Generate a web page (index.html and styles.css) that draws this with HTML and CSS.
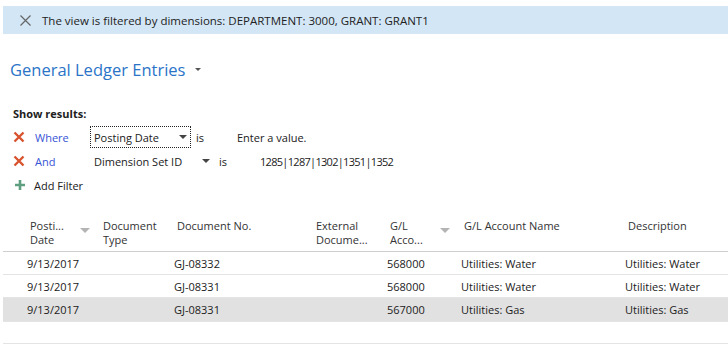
FILE: index.html
```html
<!DOCTYPE html>
<html lang="en">
<head>
  <meta charset="UTF-8">
  <title>General Ledger Entries</title>
  <link rel="stylesheet" href="styles.css">
</head>
<body>
  <div class="banner">
    <svg class="banner-close" width="11" height="11" viewBox="0 0 11 11">
      <path d="M0.5 0.5 L10.5 10.5 M10.5 0.5 L0.5 10.5" stroke="#666" stroke-width="1.2" fill="none"/>
    </svg>
    <span>The view is filtered by dimensions: DEPARTMENT: 3000, GRANT: GRANT1</span>
  </div>

  <div class="title">
    <span>General Ledger Entries</span>
    <span class="title-caret"></span>
  </div>

  <div class="filters">
    <div class="filters-label">Show results:</div>
    <div class="filter-row">
      <svg class="icon-remove" width="12" height="12" viewBox="0 0 12 12">
        <path d="M1.5 1.5 L10.5 10.5 M10.5 1.5 L1.5 10.5" stroke="#d9532f" stroke-width="2.4" fill="none"/>
      </svg>
      <span class="filter-op">Where</span>
      <div class="filter-field focused">
        <span>Posting Date</span>
        <span class="caret"></span>
      </div>
      <span class="filter-is">is</span>
      <span class="filter-value">Enter a value.</span>
    </div>
    <div class="filter-row">
      <svg class="icon-remove" width="12" height="12" viewBox="0 0 12 12">
        <path d="M1.5 1.5 L10.5 10.5 M10.5 1.5 L1.5 10.5" stroke="#d9532f" stroke-width="2.4" fill="none"/>
      </svg>
      <span class="filter-op">And</span>
      <div class="filter-field wide">
        <span>Dimension Set ID</span>
        <span class="caret"></span>
      </div>
      <span class="filter-is">is</span>
      <span class="filter-value ids">1285|1287|1302|1351|1352</span>
    </div>
    <div class="filter-row add">
      <svg class="icon-add" width="12" height="12" viewBox="0 0 12 12">
        <path d="M6 1 V11 M1 6 H11" stroke="#5e9f80" stroke-width="2.6" fill="none"/>
      </svg>
      <span>Add Filter</span>
    </div>
  </div>

  <div class="grid">
    <div class="grid-head">
      <div></div>
      <div class="col sorted">Posti...<br>Date<span class="sort"></span></div>
      <div class="col">Document<br>Type</div>
      <div class="col">Document No.</div>
      <div class="col">External<br>Docume...</div>
      <div class="col sorted">G/L<br>Acco...<span class="sort"></span></div>
      <div class="col">G/L Account Name</div>
      <div class="col">Description</div>
    </div>
    <div class="grid-row">
      <div></div>
      <div>9/13/2017</div>
      <div></div>
      <div>GJ-08332</div>
      <div></div>
      <div>568000</div>
      <div>Utilities: Water</div>
      <div>Utilities: Water</div>
    </div>
    <div class="grid-row">
      <div></div>
      <div>9/13/2017</div>
      <div></div>
      <div>GJ-08331</div>
      <div></div>
      <div>568000</div>
      <div>Utilities: Water</div>
      <div>Utilities: Water</div>
    </div>
    <div class="grid-row selected">
      <div></div>
      <div>9/13/2017</div>
      <div></div>
      <div>GJ-08331</div>
      <div></div>
      <div>567000</div>
      <div>Utilities: Gas</div>
      <div>Utilities: Gas</div>
    </div>
    <div class="grid-row empty"></div>
  </div>
</body>
</html>
```

FILE: styles.css
```css
* {
  box-sizing: border-box;
}

body {
  margin: 0;
  background-color: #ffffff;
  font-family: 'Open Sans', 'Noto Sans', sans-serif;
  font-size: 11px;
  color: #212121;
}

.banner {
  display: flex;
  align-items: center;
  gap: 11px;
  margin: 6px 0 0 3px;
  height: 28px;
  padding-left: 17px;
  background-color: #d3e6f6;
  font-size: 11.5px;
  color: #222;
}

.title {
  display: flex;
  align-items: center;
  gap: 10px;
  margin-top: 24px;
  padding-left: 10px;
  font-size: 16.5px;
  color: #2a74c8;
}

.title-caret,
.caret {
  width: 0;
  height: 0;
  border-left: 4px solid transparent;
  border-right: 4px solid transparent;
  border-top: 4px solid #444;
}

.title-caret {
  border-left-width: 3px;
  border-right-width: 3px;
  border-top-width: 3px;
  border-top-color: #555;
}

.filters {
  margin-top: 25px;
  padding-left: 13px;
}

.filters-label {
  font-weight: 700;
  height: 19px;
}

.filter-row {
  display: flex;
  align-items: center;
  height: 24px;
}

.icon-remove {
  margin-right: 10px;
}

.filter-op {
  width: 55px;
  color: #3653d6;
}

.filter-field {
  display: flex;
  align-items: center;
  justify-content: space-between;
  width: 101px;
  height: 22px;
  padding: 0 3px;
  border: 1px solid transparent;
}

.filter-field.focused {
  border: 1px dotted #222;
}

.filter-field.wide {
  width: 124px;
}

.filter-is {
  margin-left: 5px;
  width: 41px;
}

.filter-value.ids {
  letter-spacing: -0.7px;
}

.filter-row.add {
  gap: 8px;
}

.icon-add {
  margin-left: 1px;
}

.grid {
  margin: 20px 0 0 3px;
}

.grid-head,
.grid-row {
  display: grid;
  grid-template-columns: 24px 73px 74px 139px 74px 74px 164px 1fr;
  border-bottom: 1px solid #e4e4e4;
}

.grid-head {
  height: 35px;
  line-height: 14px;
  padding-top: 2px;
  border-bottom-color: #cfcfcf;
  color: #333;
}

.grid-head .col {
  position: relative;
  padding-left: 3px;
}

.sort {
  position: absolute;
  left: 53px;
  top: 9px;
  width: 0;
  height: 0;
  border-left: 5px solid transparent;
  border-right: 5px solid transparent;
  border-top: 5px solid #b4b4b4;
}

.grid-row {
  height: 23px;
  align-items: center;
}

.grid-row.selected {
  background-color: #e1e1e1;
  height: 24px;
}

.grid-row.empty {
  height: 22px;
}
```
